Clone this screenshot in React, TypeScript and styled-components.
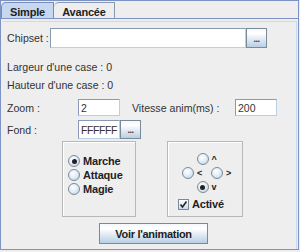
import React from "react";
import styled, { createGlobalStyle } from "styled-components";

const Global = createGlobalStyle`
  html, body { margin: 0; padding: 0; background: #eeeeee; }
  * { box-sizing: border-box; }
`;

const Root = styled.div`
  width: 299px;
  height: 250px;
  background: #eeeeee;
  border: 1px solid #7d93c3;
  font-family: "Liberation Sans", Arial, sans-serif;
  font-size: 10.6px;
  color: #333333;
  display: flex;
  flex-direction: column;
  overflow: hidden;
`;

const TabBar = styled.div`
  display: flex;
  align-items: flex-end;
  height: 18px;
  flex: none;
`;

const Tab = styled.div<{ $active?: boolean; $w: number }>`
  height: 17px;
  width: ${(p) => p.$w}px;
  display: flex;
  align-items: center;
  justify-content: center;
  font-weight: bold;
  font-size: 11px;
  letter-spacing: -0.2px;
  color: #222222;
  background: ${(p) => (p.$active ? "#c5d8ef" : "#eeeeee")};
  border: 1px solid ${(p) => (p.$active ? "#7a8ab9" : "#8a99b3")};
  border-bottom: none;
  border-left-width: ${(p) => (p.$active ? 1 : 0)}px;
  border-radius: 5px 0 0 0;
  padding-top: 1px;
`;

const Panel = styled.div`
  flex: 1;
  margin-top: -1px;
  border-top: 1px solid #7d93c3;
  padding: 2px 1px 0 2px;
  display: flex;
  flex-direction: column;
`;

const Inner = styled.div`
  flex: 1;
  border-top: 1px solid #c8daf0;
  border-right: 1px solid #c8daf0;
  display: flex;
  flex-direction: column;
  padding: 6px 0 0 4px;
`;

const Row = styled.div<{ $h: number; $mt: number }>`
  display: flex;
  align-items: center;
  height: ${(p) => p.$h}px;
  margin-top: ${(p) => p.$mt}px;
`;

const Label = styled.span<{ $w?: number; $pl?: number }>`
  width: ${(p) => (p.$w ? `${p.$w}px` : "auto")};
  padding-left: ${(p) => p.$pl ?? 0}px;
  flex: none;
  white-space: nowrap;
  color: #333333;
`;

const Field = styled.div<{ $w?: number; $ls?: number }>`
  height: 100%;
  width: ${(p) => (p.$w ? `${p.$w}px` : "auto")};
  flex: ${(p) => (p.$w ? "none" : "1")};
  background: #ffffff;
  border: 1px solid;
  border-color: #8a99b3 #b8cfe5 #b8cfe5 #8a99b3;
  display: flex;
  align-items: center;
  padding-left: 2px;
  color: #333333;
  font-size: 10.5px;
  letter-spacing: ${(p) => p.$ls ?? 0}px;
  overflow: hidden;
  white-space: nowrap;
`;

const SmallButton = styled.div`
  width: 21px;
  height: 100%;
  flex: none;
  border: 1px solid #7a8a99;
  background: linear-gradient(to bottom, #f4f8fc 0%, #ffffff 25%, #dde8f3 60%, #b8cfe5 100%);
  display: flex;
  align-items: flex-end;
  justify-content: center;
  padding-bottom: 5px;
  font-weight: bold;
  font-size: 9px;
  line-height: 5px;
  color: #333;
  letter-spacing: -0.5px;
`;

const Spacer = styled.span<{ $w: number }>`
  width: ${(p) => p.$w}px;
  flex: none;
`;

const Groups = styled.div`
  display: flex;
  margin-top: 2px;
  padding-left: 55px;
  gap: 31px;
  height: 76px;
`;

const GroupBox = styled.div<{ $w: number }>`
  width: ${(p) => p.$w}px;
  height: 100%;
  border: 1px solid #b8b8b8;
  box-shadow: inset 1px 1px 0 #ffffff;
  display: flex;
  flex-direction: column;
`;

const RadioList = styled.div`
  display: flex;
  flex-direction: column;
  gap: 2px;
  padding: 13px 0 0 5px;
`;

const Choice = styled.div`
  display: flex;
  align-items: center;
  gap: 3px;
  height: 12px;
  font-weight: bold;
  color: #222222;
  font-size: 11px;
  letter-spacing: -0.2px;
`;

const RadioCircle = styled.span<{ $on?: boolean }>`
  width: 12px;
  height: 12px;
  border-radius: 50%;
  border: 1px solid #7a8a99;
  background: radial-gradient(circle at 40% 35%, #ffffff 0%, #e4edf7 45%, #b8cfe5 100%);
  display: flex;
  align-items: center;
  justify-content: center;
  flex: none;
  &::after {
    content: "";
    width: 5px;
    height: 5px;
    border-radius: 50%;
    background: ${(p) => (p.$on ? "#222" : "transparent")};
  }
`;

const DirPad = styled.div`
  display: flex;
  flex-direction: column;
  align-items: center;
  padding: 11px 0 0 4px;
  gap: 2px;
`;

const DirRow = styled.div`
  display: flex;
  gap: 8px;
`;

const Arrow = styled.span`
  font-size: 9px;
  font-weight: bold;
  width: 6px;
`;

const CheckRow = styled.div`
  display: flex;
  align-items: center;
  gap: 3px;
  margin: 5px 0 0 10px;
  font-weight: bold;
  font-size: 11px;
  color: #222222;
  letter-spacing: -0.2px;
`;

const CheckBox = styled.span`
  width: 11px;
  height: 11px;
  border: 1px solid #7a8a99;
  background: linear-gradient(to bottom, #ffffff, #c8daf0);
  display: flex;
  align-items: center;
  justify-content: center;
`;

const ButtonRow = styled.div`
  display: flex;
  margin-top: 6px;
  padding-left: 92px;
`;

const Button = styled.div`
  width: 109px;
  height: 21px;
  border: 1px solid #7a8a99;
  background: linear-gradient(to bottom, #f4f8fc 0%, #ffffff 25%, #dde8f3 60%, #b8cfe5 100%);
  display: flex;
  align-items: center;
  justify-content: center;
  font-weight: bold;
  font-size: 11px;
  color: #222222;
  letter-spacing: -0.3px;
`;

const Dots = () => <SmallButton>...</SmallButton>;

export default function App() {
  return (
    <Root>
      <Global />
      <TabBar>
        <Tab $active $w={53}>Simple</Tab>
        <Tab $w={61}>Avancée</Tab>
      </TabBar>
      <Panel>
        <Inner>
          <Row $h={20} $mt={0}>
            <Label $w={43}>Chipset :</Label>
            <Field />
            <Dots />
            <Spacer $w={29} />
          </Row>
          <Row $h={18} $mt={10}>
            <Label>Largeur d'une case : 0</Label>
          </Row>
          <Row $h={18} $mt={0}>
            <Label>Hauteur d'une case : 0</Label>
          </Row>
          <Row $h={17} $mt={5}>
            <Label $w={71}>Zoom :</Label>
            <Field $w={42}>2</Field>
            <Label $w={115} $pl={12}>Vitesse anim(ms) :</Label>
            <Field $w={42}>200</Field>
          </Row>
          <Row $h={19} $mt={4}>
            <Label $w={71}>Fond :</Label>
            <Field $w={42} $ls={-0.4}>FFFFFF</Field>
            <Dots />
          </Row>
          <Groups>
            <GroupBox $w={74}>
              <RadioList>
                <Choice><RadioCircle $on />Marche</Choice>
                <Choice><RadioCircle />Attaque</Choice>
                <Choice><RadioCircle />Magie</Choice>
              </RadioList>
            </GroupBox>
            <GroupBox $w={76}>
              <DirPad>
                <Choice><RadioCircle /><Arrow>^</Arrow></Choice>
                <DirRow>
                  <Choice><RadioCircle /><Arrow>&lt;</Arrow></Choice>
                  <Choice><RadioCircle /><Arrow>&gt;</Arrow></Choice>
                </DirRow>
                <Choice><RadioCircle $on /><Arrow>v</Arrow></Choice>
              </DirPad>
              <CheckRow>
                <CheckBox>
                  <svg width="9" height="9" viewBox="0 0 9 9">
                    <path d="M1.5 4.5 L3.5 7 L7.5 1.5" stroke="#222" strokeWidth="1.6" fill="none" />
                  </svg>
                </CheckBox>
                Activé
              </CheckRow>
            </GroupBox>
          </Groups>
          <ButtonRow>
            <Button>Voir l'animation</Button>
          </ButtonRow>
        </Inner>
      </Panel>
    </Root>
  );
}
